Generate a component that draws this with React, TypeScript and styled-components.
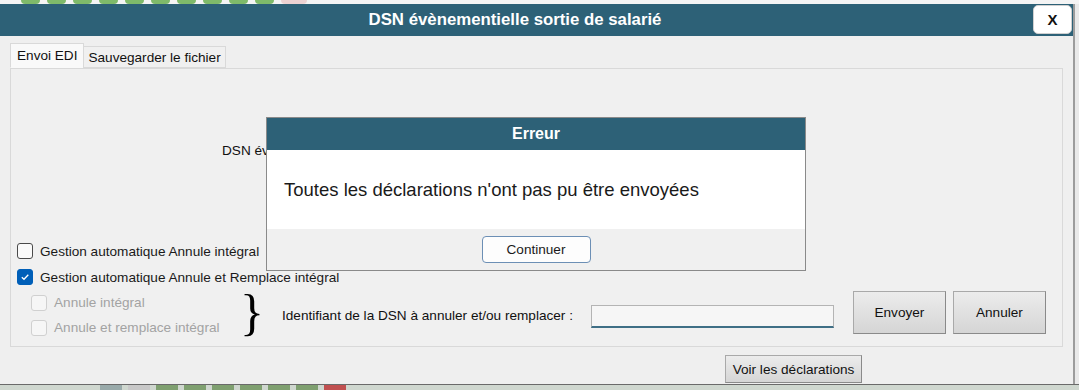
import React from 'react';
import styled, { createGlobalStyle } from 'styled-components';

const GlobalStyle = createGlobalStyle`
  html, body {
    margin: 0;
    padding: 0;
    background: #e6e6e6;
  }
  body {
    font-family: "Liberation Sans", Arial, sans-serif;
  }
`;

const teal = '#2d6177';

const Page = styled.div`
  position: relative;
  width: 1079px;
  height: 390px;
  overflow: hidden;
  display: flex;
  flex-direction: column;
  background: #e9e9e9;
`;

const TopStrip = styled.div`
  height: 4px;
  display: flex;
  align-items: flex-end;
  gap: 7px;
  padding-left: 21px;
  background: #f4f4f4;
`;

const Pill = styled.span<{ $color: string; $w?: number }>`
  width: ${(p) => p.$w ?? 19}px;
  height: 4px;
  border-radius: 0 0 6px 6px;
  background: ${(p) => p.$color};
`;

const Window = styled.div`
  width: 1073px;
  flex: 1;
  display: flex;
  flex-direction: column;
  border-right: 2px solid #9c9c9c;
  background: #efefef;
`;

const TitleWrap = styled.div`
  position: relative;
`;

const TitleBar = styled.div`
  height: 32px;
  background: ${teal};
  display: flex;
  align-items: center;
  padding-right: 43px;
  color: #fff;
  font-weight: bold;
  font-size: 16.8px;
`;

const TitleText = styled.div`
  flex: 1;
  text-align: center;
`;

const CloseButton = styled.button`
  position: absolute;
  right: 1px;
  top: 1px;
  width: 39px;
  height: 29px;
  border: 1px solid #d0d0d0;
  border-radius: 5px;
  background: #fff;
  font-family: "Liberation Sans", Arial, sans-serif;
  font-weight: bold;
  font-size: 15px;
  color: #111;
  padding: 0;
`;

const Body = styled.div`
  flex: 1;
  display: flex;
  flex-direction: column;
  padding: 7px 10px 0 10px;
  font-size: 13.6px;
  color: #111;
`;

const TabRow = styled.div`
  display: flex;
  align-items: flex-end;
  height: 25px;
`;

const Tab = styled.div<{ $active?: boolean }>`
  height: ${(p) => (p.$active ? '25px' : '22px')};
  display: flex;
  align-items: center;
  padding: 0 ${(p) => (p.$active ? '6px' : '4px')};
  background: ${(p) => (p.$active ? '#f9f9f9' : '#f0f0f0')};
  border: 1px solid #d9d9d9;
  border-bottom: ${(p) => (p.$active ? '1px solid #f9f9f9' : '1px solid #d9d9d9')};
  margin-right: -1px;
  box-sizing: border-box;
`;

const Panel = styled.div`
  height: 279px;
  box-sizing: border-box;
  border: 1px solid #d9d9d9;
  background: #f0f0f0;
  display: flex;
  flex-direction: column;
  padding: 0 16px 0 6px;
`;

const InfoRow = styled.div`
  height: 169px;
  box-sizing: border-box;
  padding: 74px 0 0 205px;
`;

const CheckRow = styled.label<{ $disabled?: boolean }>`
  display: flex;
  align-items: center;
  gap: 7px;
  height: ${(p) => (p.$disabled ? '25px' : '26px')};
  padding-left: ${(p) => (p.$disabled ? '14px' : '0')};
  color: ${(p) => (p.$disabled ? '#a3a3a3' : '#1a1a1a')};
`;

const Box = styled.span<{ $checked?: boolean; $disabled?: boolean }>`
  width: 16px;
  height: 16px;
  box-sizing: border-box;
  border-radius: 3px;
  border: 1px solid ${(p) => (p.$checked ? '#005fb8' : p.$disabled ? '#d0d0d0' : '#4a4a4a')};
  background: ${(p) => (p.$checked ? '#005fb8' : p.$disabled ? '#f6f6f6' : '#fafafa')};
  display: flex;
  align-items: center;
  justify-content: center;
`;

const ActionRow = styled.div`
  display: flex;
  align-items: center;
  height: 50px;
`;

const SubColumn = styled.div`
  width: 226px;
  display: flex;
  flex-direction: column;
`;

const Brace = styled.span`
  font-family: "Liberation Serif", "Times New Roman", serif;
  font-size: 50px;
  line-height: 50px;
  width: 18px;
  margin-top: -6px;
  margin-left: -3px;
  color: #000;
`;

const FieldLabel = styled.span`
  margin-left: 24px;
`;

const TextInput = styled.input`
  margin-left: 18px;
  width: 243px;
  height: 23px;
  box-sizing: border-box;
  border: 1px solid #b4b4b4;
  border-bottom: 2px solid #3f6f86;
  background: #f6f6f6;
  margin-top: 2px;
`;

const GrayButton = styled.button<{ $w: number; $h: number }>`
  width: ${(p) => p.$w}px;
  height: ${(p) => p.$h}px;
  box-sizing: border-box;
  border: 1px solid #a9a9a9;
  border-right-color: #8a8a8a;
  border-bottom-color: #8a8a8a;
  background: linear-gradient(#ececec, #d5d5d5);
  font-family: "Liberation Sans", Arial, sans-serif;
  font-size: 13.6px;
  color: #111;
  padding: 0;
`;

const ButtonGroup = styled.div`
  display: flex;
  gap: 7px;
  margin-left: 19px;
  align-self: flex-start;
  margin-top: 1px;
`;

const Footer = styled.div`
  display: flex;
  padding: 8px 0 0 715px;
`;

const BottomStrip = styled.div`
  height: 5px;
  border-top: 1px solid #6a6a6a;
  background: #cfd7cf;
  display: flex;
  gap: 6px;
  padding-left: 100px;
`;

const Block = styled.span<{ $color: string }>`
  width: 22px;
  background: ${(p) => p.$color};
`;

const Dialog = styled.div`
  position: absolute;
  left: 266px;
  top: 117px;
  width: 540px;
  height: 154px;
  box-sizing: border-box;
  border: 1px solid #8a8a8a;
  display: flex;
  flex-direction: column;
  background: #f0f0f0;
`;

const DialogTitle = styled.div`
  height: 32px;
  background: ${teal};
  color: #fff;
  font-weight: bold;
  font-size: 16px;
  display: flex;
  align-items: center;
  justify-content: center;
`;

const DialogBody = styled.div`
  height: 79px;
  background: #fff;
  display: flex;
  align-items: center;
  padding-left: 17px;
  font-size: 18.5px;
  color: #1a1a1a;
`;

const DialogFooter = styled.div`
  flex: 1;
  display: flex;
  justify-content: center;
  padding-top: 7px;
`;

const DialogButton = styled.button`
  width: 109px;
  height: 27px;
  border: 1px solid #6c8fb5;
  border-radius: 4px;
  background: #fdfdfd;
  font-family: "Liberation Sans", Arial, sans-serif;
  font-size: 13.6px;
  color: #1a1a1a;
`;

const Check = () => (
  <svg width="10" height="10" viewBox="0 0 10 10">
    <path d="M1.8 5.2 L4 7.3 L8.3 2.8" fill="none" stroke="#fff" strokeWidth="1.3" />
  </svg>
);

const App: React.FC = () => {
  const greens = Array.from({ length: 10 });
  return (
    <Page>
      <GlobalStyle />
      <TopStrip>
        {greens.map((_, i) => <Pill key={i} $color="#7fba6a" />)}
        <Pill $color="#ecd2d2" $w={26} />
      </TopStrip>
      <Window>
        <TitleWrap>
          <TitleBar>
            <TitleText>DSN évènementielle sortie de salarié</TitleText>
          </TitleBar>
          <CloseButton>X</CloseButton>
        </TitleWrap>
        <Body>
          <TabRow>
            <Tab $active>Envoi EDI</Tab>
            <Tab>Sauvegarder le fichier</Tab>
          </TabRow>
          <Panel>
            <InfoRow>DSN évènementielle sortie de salarié à envoyer</InfoRow>
            <CheckRow>
              <Box />
              Gestion automatique Annule intégral
            </CheckRow>
            <CheckRow>
              <Box $checked><Check /></Box>
              Gestion automatique Annule et Remplace intégral
            </CheckRow>
            <ActionRow>
              <SubColumn>
                <CheckRow $disabled>
                  <Box $disabled />
                  Annule intégral
                </CheckRow>
                <CheckRow $disabled>
                  <Box $disabled />
                  Annule et remplace intégral
                </CheckRow>
              </SubColumn>
              <Brace>{'}'}</Brace>
              <FieldLabel>Identifiant de la DSN à annuler et/ou remplacer :</FieldLabel>
              <TextInput />
              <ButtonGroup>
                <GrayButton $w={93} $h={43}>Envoyer</GrayButton>
                <GrayButton $w={93} $h={43}>Annuler</GrayButton>
              </ButtonGroup>
            </ActionRow>
          </Panel>
          <Footer>
            <GrayButton $w={137} $h={28}>Voir les déclarations</GrayButton>
          </Footer>
        </Body>
      </Window>
      <BottomStrip>
        {['#9aa', '#c8c8c8', '#7fa070', '#7fa070', '#7fa070', '#7fa070', '#7fa070', '#7fa070', '#c05050'].map((c, i) => (
          <Block key={i} $color={c} />
        ))}
      </BottomStrip>
      <Dialog>
        <DialogTitle>Erreur</DialogTitle>
        <DialogBody>Toutes les déclarations n'ont pas pu être envoyées</DialogBody>
        <DialogFooter>
          <DialogButton>Continuer</DialogButton>
        </DialogFooter>
      </Dialog>
    </Page>
  );
};

export default App;
